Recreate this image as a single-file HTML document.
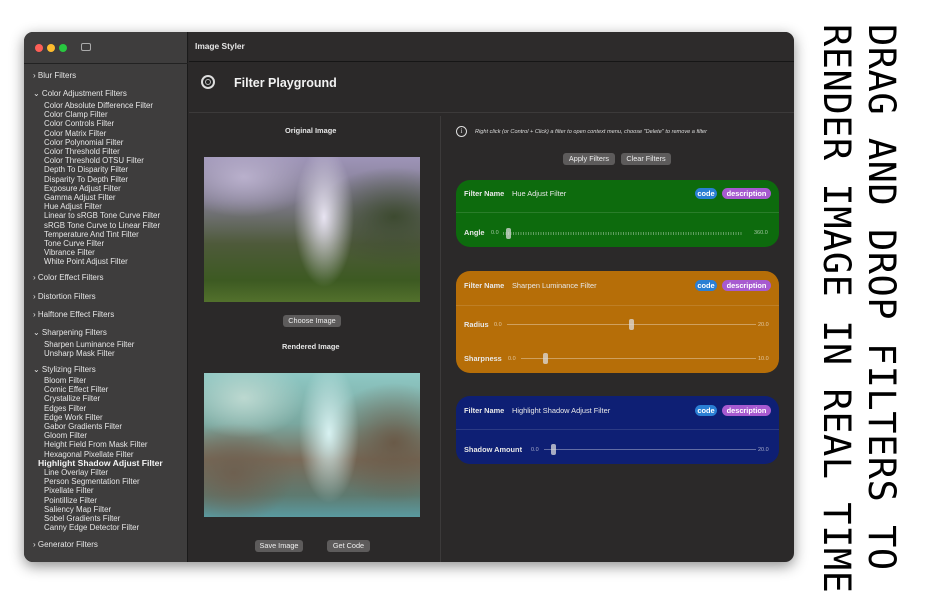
<!DOCTYPE html>
<html><head><meta charset="utf-8"><style>
*{margin:0;padding:0;box-sizing:border-box}
body{width:950px;height:594px;background:#fff;position:relative;overflow:hidden;font-family:"Liberation Sans",sans-serif}
.win{position:absolute;left:24px;top:32px;width:770px;height:530px;border-radius:9px;background:#2b2929;overflow:hidden;box-shadow:0 4px 14px rgba(0,0,0,.45)}
.side{position:absolute;left:0;top:0;width:164px;height:530px;background:#3e3d3d;border-right:1px solid #1a1a1a}
.t{position:absolute;color:#e6e6e6;font-size:7.9px;white-space:nowrap;line-height:9px}
.h{font-size:8px}
.dot{position:absolute;top:12px;width:8px;height:8px;border-radius:50%}
.btn{position:absolute;background:#5d5b5b;color:#eee;font-size:7.3px;text-align:center;line-height:12px;height:12px;border-radius:3px}
.card{position:absolute;left:432px;width:323px;border-radius:14px}
.card .lab{position:absolute;color:#e8e8e8;font-size:7.4px;font-weight:bold}
.card .val{position:absolute;color:#e8e8e8;font-size:7.4px}
.pill{position:absolute;font-size:7.4px;font-weight:bold;color:#fff;height:11px;line-height:11px;border-radius:6px;text-align:center}
.sl{position:absolute;height:1px;background:rgba(255,255,255,.35)}
.num{position:absolute;font-size:5.5px;color:rgba(255,255,255,.6)}
.knob{position:absolute;width:5px;height:11px;border-radius:2px;background:rgba(220,220,220,.75)}
.sep{position:absolute;left:0;width:323px;height:1px;background:rgba(255,255,255,.12)}
.vt{position:absolute;font-family:"DejaVu Sans Mono","Liberation Mono",monospace;font-size:37px;color:#000;white-space:nowrap;transform-origin:0 0;transform:rotate(90deg);letter-spacing:0.5px}
</style></head><body>
<div class="win">
 <div class="side">
  <div class="dot" style="left:11px;background:#fe5f57"></div>
  <div class="dot" style="left:23px;background:#febc2e"></div>
  <div class="dot" style="left:35px;background:#28c840"></div>
  <div style="position:absolute;left:57px;top:11px;width:10px;height:8px;border:1px solid #aaa;border-radius:2px"></div>
  <div style="position:absolute;left:0;top:31px;width:164px;height:1px;background:#222"></div>
  <div class="t h" style="left:9px;top:39px">›&nbsp;Blur Filters</div>
  <div class="t h" style="left:9px;top:57px">⌄&nbsp;Color Adjustment Filters</div>
  <div class="t" style="left:20px;top:69px">Color Absolute Difference Filter</div>
  <div class="t" style="left:20px;top:78.2px">Color Clamp Filter</div>
  <div class="t" style="left:20px;top:87.4px">Color Controls Filter</div>
  <div class="t" style="left:20px;top:96.6px">Color Matrix Filter</div>
  <div class="t" style="left:20px;top:105.8px">Color Polynomial Filter</div>
  <div class="t" style="left:20px;top:115px">Color Threshold Filter</div>
  <div class="t" style="left:20px;top:124.2px">Color Threshold OTSU Filter</div>
  <div class="t" style="left:20px;top:133.4px">Depth To Disparity Filter</div>
  <div class="t" style="left:20px;top:142.6px">Disparity To Depth Filter</div>
  <div class="t" style="left:20px;top:151.8px">Exposure Adjust Filter</div>
  <div class="t" style="left:20px;top:161px">Gamma Adjust Filter</div>
  <div class="t" style="left:20px;top:170.2px">Hue Adjust Filter</div>
  <div class="t" style="left:20px;top:179.4px">Linear to sRGB Tone Curve Filter</div>
  <div class="t" style="left:20px;top:188.6px">sRGB Tone Curve to Linear Filter</div>
  <div class="t" style="left:20px;top:197.8px">Temperature And Tint Filter</div>
  <div class="t" style="left:20px;top:207px">Tone Curve Filter</div>
  <div class="t" style="left:20px;top:216.2px">Vibrance Filter</div>
  <div class="t" style="left:20px;top:225.4px">White Point Adjust Filter</div>
  <div class="t h" style="left:9px;top:241px">›&nbsp;Color Effect Filters</div>
  <div class="t h" style="left:9px;top:260px">›&nbsp;Distortion Filters</div>
  <div class="t h" style="left:9px;top:278px">›&nbsp;Halftone Effect Filters</div>
  <div class="t h" style="left:9px;top:296px">⌄&nbsp;Sharpening Filters</div>
  <div class="t" style="left:20px;top:308px">Sharpen Luminance Filter</div>
  <div class="t" style="left:20px;top:317.2px">Unsharp Mask Filter</div>
  <div class="t h" style="left:9px;top:333px">⌄&nbsp;Stylizing Filters</div>
  <div class="t" style="left:20px;top:344px">Bloom Filter</div>
  <div class="t" style="left:20px;top:353.2px">Comic Effect Filter</div>
  <div class="t" style="left:20px;top:362.4px">Crystallize Filter</div>
  <div class="t" style="left:20px;top:371.6px">Edges Filter</div>
  <div class="t" style="left:20px;top:380.8px">Edge Work Filter</div>
  <div class="t" style="left:20px;top:390px">Gabor Gradients Filter</div>
  <div class="t" style="left:20px;top:399.2px">Gloom Filter</div>
  <div class="t" style="left:20px;top:408.4px">Height Field From Mask Filter</div>
  <div class="t" style="left:20px;top:417.6px">Hexagonal Pixellate Filter</div>
  <div class="t" style="left:14px;top:426.8px;font-size:8.6px;font-weight:bold;color:#f4f4f4">Highlight Shadow Adjust Filter</div>
  <div class="t" style="left:20px;top:436px">Line Overlay Filter</div>
  <div class="t" style="left:20px;top:445.2px">Person Segmentation Filter</div>
  <div class="t" style="left:20px;top:454.4px">Pixellate Filter</div>
  <div class="t" style="left:20px;top:463.6px">Pointillize Filter</div>
  <div class="t" style="left:20px;top:472.8px">Saliency Map Filter</div>
  <div class="t" style="left:20px;top:482px">Sobel Gradients Filter</div>
  <div class="t" style="left:20px;top:491.2px">Canny Edge Detector Filter</div>
  <div class="t h" style="left:9px;top:508px">›&nbsp;Generator Filters</div>
 </div>
 <div style="position:absolute;left:165px;top:0;width:605px;height:30px;background:#2d2b2b;border-bottom:1px solid #161616"></div>
 <div class="t" style="left:171px;top:10px;font-size:8.4px;font-weight:bold">Image Styler</div>
 <div style="position:absolute;left:177px;top:43px;width:14px;height:14px;border-radius:50%;border:2px solid #ddd;background:#222"><div style="position:absolute;left:2px;top:2px;width:6px;height:6px;border-radius:50%;border:1px solid #bbb"></div></div>
 <div class="t" style="left:210px;top:44px;font-size:12.5px;font-weight:bold;line-height:14px;color:#f2f2f2">Filter Playground</div>
 <div style="position:absolute;left:165px;top:80px;width:605px;height:1px;background:#3c3a3a"></div>
 <div style="position:absolute;left:416px;top:84px;width:1px;height:446px;background:#3c3a3a"></div>
 <div class="t" style="left:261px;top:94px;font-size:7.4px;font-weight:bold">Original Image</div>
 <div style="position:absolute;left:180px;top:125px;width:216px;height:145px;background:
  radial-gradient(ellipse 30px 70px at 120px 60px,#e8e4f2,transparent),
  radial-gradient(ellipse 70px 40px at 40px 20px,#b9b0cc,transparent),
  radial-gradient(ellipse 80px 50px at 190px 60px,#3d4a30,transparent),
  linear-gradient(180deg,#9e94b8 0%,#7e7a8c 30%,#4e5a3a 60%,#3d5a22 85%,#52702c 100%)"></div>
 <div class="btn" style="left:259px;top:283px;width:58px">Choose Image</div>
 <div class="t" style="left:258px;top:310px;font-size:7.4px;font-weight:bold">Rendered Image</div>
 <div style="position:absolute;left:180px;top:341px;width:216px;height:144px;background:
  radial-gradient(ellipse 30px 70px at 125px 60px,#d8f2f2,transparent),
  radial-gradient(ellipse 60px 40px at 40px 25px,#bcd8d0,transparent),
  radial-gradient(ellipse 70px 60px at 190px 70px,#6a5a48,transparent),
  radial-gradient(ellipse 60px 50px at 30px 100px,#6e6050,transparent),
  linear-gradient(180deg,#8ec8c4 0%,#7aa8a0 35%,#7a6a58 60%,#5e7a70 85%,#5a9aa0 100%)"></div>
 <div class="btn" style="left:231px;top:508px;width:48px">Save Image</div>
 <div class="btn" style="left:303px;top:508px;width:43px">Get Code</div>
 <div style="position:absolute;left:432px;top:94px;width:11px;height:11px;border-radius:50%;border:1px solid #ddd;color:#ddd;font-size:7px;text-align:center;line-height:9px;font-family:'Liberation Serif',serif">i</div>
 <div class="t" style="left:451px;top:96px;font-size:5.6px;font-style:italic;color:#ddd">Right click (or Control + Click) a filter to open context menu, choose "Delete" to remove a filter</div>
 <div class="btn" style="left:539px;top:121px;width:52px">Apply Filters</div>
 <div class="btn" style="left:597px;top:121px;width:50px">Clear Filters</div>

 <div class="card" style="top:148px;height:67px;background:#0d6b0d">
  <div class="lab" style="left:8px;top:9px">Filter Name</div><div class="val" style="left:56px;top:9px">Hue Adjust Filter</div>
  <div class="pill" style="left:239px;top:8px;width:22px;background:#2a7fd4">code</div>
  <div class="pill" style="left:266px;top:8px;width:49px;background:#a75ad0">description</div>
  <div class="sep" style="top:32px"></div>
  <div class="lab" style="left:8px;top:48px">Angle</div><div class="num" style="left:35px;top:50px">0.0</div>
  <div class="sl" style="left:47px;width:240px;height:3px;top:52px;background:repeating-linear-gradient(90deg,rgba(255,255,255,.35) 0 1px,transparent 1px 2.5px)"></div>
  <div class="knob" style="left:50px;top:48px"></div>
  <div class="num" style="left:298px;top:50px">360.0</div>
 </div>

 <div class="card" style="top:239px;height:102px;background:#b66e08">
  <div class="lab" style="left:8px;top:10px">Filter Name</div><div class="val" style="left:56px;top:10px">Sharpen Luminance Filter</div>
  <div class="pill" style="left:239px;top:9px;width:22px;background:#2a7fd4">code</div>
  <div class="pill" style="left:266px;top:9px;width:49px;background:#a75ad0">description</div>
  <div class="sep" style="top:34px"></div>
  <div class="lab" style="left:8px;top:49px">Radius</div><div class="num" style="left:38px;top:51px">0.0</div>
  <div class="sl" style="left:51px;top:53px;width:249px"></div>
  <div class="knob" style="left:173px;top:48px"></div>
  <div class="num" style="left:302px;top:51px">20.0</div>
  <div class="lab" style="left:8px;top:83px">Sharpness</div><div class="num" style="left:52px;top:85px">0.0</div>
  <div class="sl" style="left:65px;top:87px;width:235px"></div>
  <div class="knob" style="left:87px;top:82px"></div>
  <div class="num" style="left:302px;top:85px">10.0</div>
 </div>

 <div class="card" style="top:364px;height:68px;background:#0e1f74">
  <div class="lab" style="left:8px;top:10px">Filter Name</div><div class="val" style="left:56px;top:10px">Highlight Shadow Adjust Filter</div>
  <div class="pill" style="left:239px;top:9px;width:22px;background:#2a7fd4">code</div>
  <div class="pill" style="left:266px;top:9px;width:49px;background:#a75ad0">description</div>
  <div class="sep" style="top:33px"></div>
  <div class="lab" style="left:8px;top:49px">Shadow Amount</div><div class="num" style="left:75px;top:51px">0.0</div>
  <div class="sl" style="left:88px;top:53px;width:212px"></div>
  <div class="knob" style="left:95px;top:48px"></div>
  <div class="num" style="left:302px;top:51px">20.0</div>
 </div>
</div>
<div class="vt" style="left:903px;top:24px">DRAG AND DROP FILTERS TO</div>
<div class="vt" style="left:858px;top:24px">RENDER IMAGE IN REAL TIME</div>
</body></html>
